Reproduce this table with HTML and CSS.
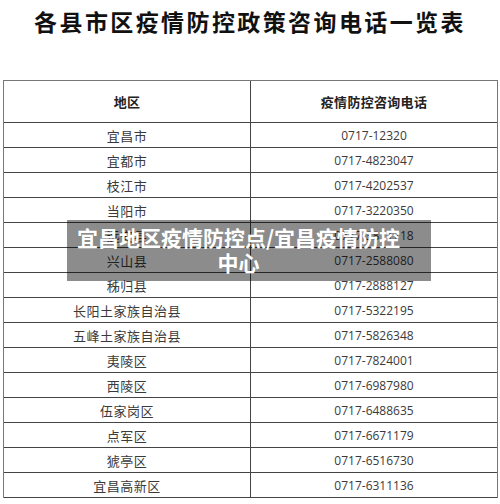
FILE: index.html
```html
<!DOCTYPE html>
<html lang="zh-CN">
<head>
<meta charset="utf-8">
<title>各县市区疫情防控政策咨询电话一览表</title>
<link rel="stylesheet" href="styles.css">
</head>
<body>
<div class="page">
  <h1 class="title">各县市区疫情防控政策咨询电话一览表</h1>
  <div class="sheet">
    <div class="cell head">地区</div><div class="cell head">疫情防控咨询电话</div>
    <div class="cell name">宜昌市</div><div class="cell tel">0717-12320</div>
    <div class="cell name">宜都市</div><div class="cell tel">0717-4823047</div>
    <div class="cell name">枝江市</div><div class="cell tel">0717-4202537</div>
    <div class="cell name">当阳市</div><div class="cell tel">0717-3220350</div>
    <div class="cell name">远安县</div><div class="cell tel">0717-3811718</div>
    <div class="cell name">兴山县</div><div class="cell tel">0717-2588080</div>
    <div class="cell name">秭归县</div><div class="cell tel">0717-2888127</div>
    <div class="cell name">长阳土家族自治县</div><div class="cell tel">0717-5322195</div>
    <div class="cell name">五峰土家族自治县</div><div class="cell tel">0717-5826348</div>
    <div class="cell name">夷陵区</div><div class="cell tel">0717-7824001</div>
    <div class="cell name">西陵区</div><div class="cell tel">0717-6987980</div>
    <div class="cell name">伍家岗区</div><div class="cell tel">0717-6488635</div>
    <div class="cell name">点军区</div><div class="cell tel">0717-6671179</div>
    <div class="cell name">猇亭区</div><div class="cell tel">0717-6516730</div>
    <div class="cell name">宜昌高新区</div><div class="cell tel">0717-6311136</div>
  </div>
  <div class="caption">宜昌地区疫情防控点/宜昌疫情防控中心</div>
</div>
</body>
</html>
```
FILE: styles.css
```css
html, body {
  margin: 0;
  padding: 0;
  background: #ffffff;
}
.page {
  position: relative;
  width: 500px;
  height: 504px;
  overflow: hidden;
  font-family: "Noto Sans CJK SC", "Noto Sans", sans-serif;
}
.title {
  margin: 0;
  padding-top: 7px;
  height: 80px;
  box-sizing: border-box;
  font-size: 23px;
  line-height: 28px;
  font-weight: 700;
  letter-spacing: 2.4px;
  text-align: center;
  color: #111;
}
.sheet {
  margin-left: 3px;
  width: 495px;
  box-sizing: border-box;
  border: 1px solid #777;
  border-bottom: none;
  display: grid;
  grid-template-columns: 246px 246px;
  column-gap: 1px;
  background: linear-gradient(#444, #444) 246px 0 / 1px 100% no-repeat;
}
.cell {
  height: 24px;
  border-bottom: 1px solid #444;
  display: flex;
  align-items: center;
  justify-content: center;
  color: #3a3a3a;
}
.head {
  height: 41px;
  font-size: 13px;
  font-weight: 700;
  color: #222;
  letter-spacing: 0.3px;
}
.name {
  font-size: 13px;
  letter-spacing: 0.5px;
}
.tel {
  font-family: "Open Sans", "Liberation Sans", sans-serif;
  font-size: 12px;
  font-weight: 400;
  color: #3a3a3a;
}
.caption {
  position: absolute;
  left: 67px;
  top: 220px;
  width: 364px;
  box-sizing: border-box;
  padding: 5px 29px 6px 8px;
  background: rgba(0, 0, 0, 0.45);
  color: #ffffff;
  font-size: 21px;
  line-height: 25px;
  font-weight: 700;
  text-align: center;
}
```
